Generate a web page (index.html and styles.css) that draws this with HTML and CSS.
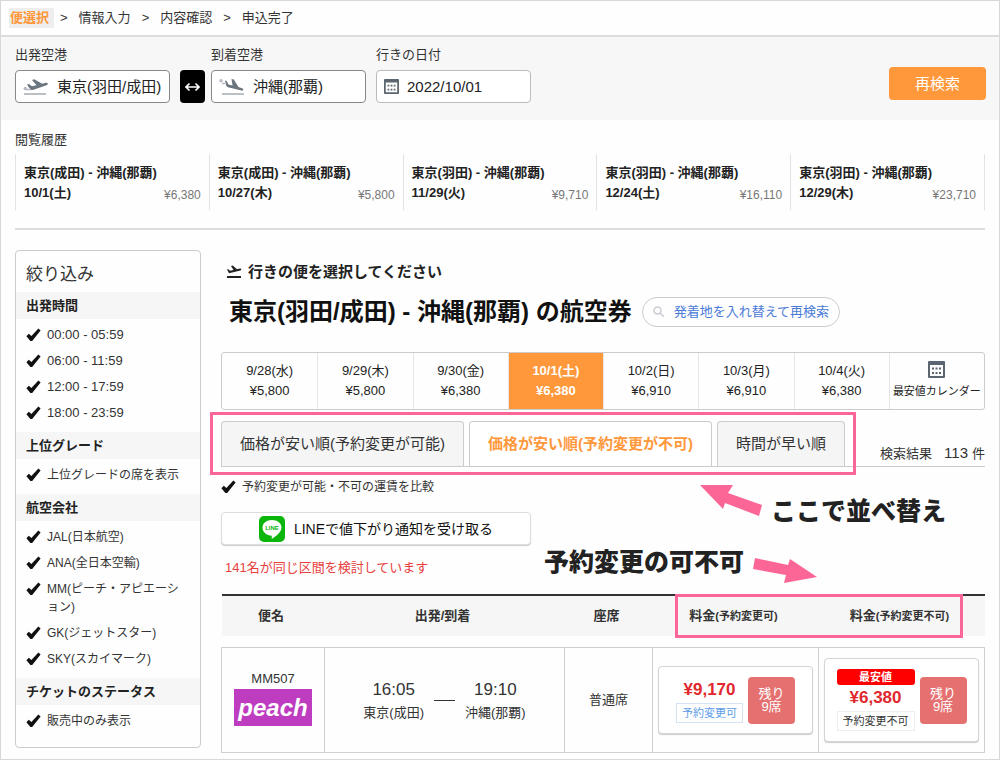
FILE: index.html
```html
<!DOCTYPE html>
<html lang="ja">
<head>
<meta charset="utf-8">
<meta name="viewport" content="width=device-width, initial-scale=1">
<title>便選択</title>
<link rel="stylesheet" href="styles.css">
</head>
<body>
<svg class="defs" aria-hidden="true">
  <symbol id="check" viewBox="0 0 15 14"><path d="M0.4 8.2 L2.8 5.8 L5.4 8 L12.4 0.6 L14.6 2.4 L6.2 13 L4.4 13 Z" fill="#111"/></symbol>
  <symbol id="calendar" viewBox="0 0 17 17"><path fill="#5b6670" fill-rule="evenodd" d="M1 0h15a1 1 0 0 1 1 1v15a1 1 0 0 1-1 1H1a1 1 0 0 1-1-1V1a1 1 0 0 1 1-1zM2 4v11h13V4z"/><path fill="#5b6670" d="M4 6.500h2v2H4zM7.500 6.500h2v2h-2zM11 6.500h2v2h-2zM4 11h2v2H4zM7.500 11h2v2h-2zM11 11h2v2h-2z"/></symbol>
</svg>
<div class="page">
  <nav class="steps" aria-label="申込手順">
    <span class="step-current">便選択</span><span class="sep">&gt;</span><span>情報入力</span><span class="sep">&gt;</span><span>内容確認</span><span class="sep">&gt;</span><span>申込完了</span>
  </nav>

  <form class="search">
    <div class="field">
      <label for="from">出発空港</label>
      <div class="box">
        <svg width="26" height="18" viewBox="0 0 26 18" aria-hidden="true"><path fill="#6b757d" d="M4 6.500l1.800-.5 3.200 2.300 4.500-1.100L9 2l2.200-.7 8 4.400 3.600-.9c2.200-.4 2.800 1.700.7 2.400L10.500 11.800c-2 .5-2.800.1-3.700-1z"/><circle cx="2.200" cy="10.500" r="1.700" fill="#b4bac0"/><path d="M3 11.500h5" stroke="#b4bac0" stroke-width="1.500"/><path d="M1 16h22" stroke="#a4abb1" stroke-width="1.500"/></svg>
        <input id="from" type="text" value="東京(羽田/成田)">
      </div>
    </div>
    <button class="swap" type="button" aria-label="出発と到着を入れ替え"><svg width="15" height="10" viewBox="0 0 15 10" aria-hidden="true"><path d="M1 5h13M4.500 1.500L1 5l3.500 3.500M10.500 1.500L14 5l-3.500 3.500" fill="none" stroke="#fff" stroke-width="1.600"/></svg></button>
    <div class="field">
      <label for="to">到着空港</label>
      <div class="box">
        <svg width="26" height="18" viewBox="0 0 26 18" aria-hidden="true"><path fill="#6b757d" d="M6 2.500l1.700.5 1.700 3.400 4.200 1.200L12.500 1l2.300.6 4.700 7.500 3.500 1.100c2.200.8 1.500 2.800-.6 2.400L10 9.500c-2-.6-2.800-1.200-3-2.800z"/><circle cx="2" cy="2.800" r="1.700" fill="#b4bac0"/><path d="M3 5.500h3" stroke="#b4bac0" stroke-width="1.500"/><path d="M3 16h22" stroke="#a4abb1" stroke-width="1.500"/></svg>
        <input id="to" type="text" value="沖縄(那覇)">
      </div>
    </div>
    <div class="field date">
      <label for="date">行きの日付</label>
      <div class="box light">
        <svg width="15" height="15" aria-hidden="true"><use href="#calendar"/></svg>
        <input id="date" type="text" value="2022/10/01">
      </div>
    </div>
    <button class="research" type="submit">再検索</button>
  </form>

  <section class="history">
    <h2>閲覧履歴</h2>
    <ul>
      <li><b>東京(成田) - 沖縄(那覇)</b><div><b>10/1(土)</b><span>¥6,380</span></div></li>
      <li><b>東京(成田) - 沖縄(那覇)</b><div><b>10/27(木)</b><span>¥5,800</span></div></li>
      <li><b>東京(羽田) - 沖縄(那覇)</b><div><b>11/29(火)</b><span>¥9,710</span></div></li>
      <li><b>東京(羽田) - 沖縄(那覇)</b><div><b>12/24(土)</b><span>¥16,110</span></div></li>
      <li><b>東京(羽田) - 沖縄(那覇)</b><div><b>12/29(木)</b><span>¥23,710</span></div></li>
    </ul>
  </section>

  <div class="columns">
    <aside class="filter">
      <h2>絞り込み</h2>
      <h3>出発時間</h3>
      <div class="group times">
        <label class="check"><input type="checkbox" checked><svg><use href="#check"/></svg><span>00:00 - 05:59</span></label>
        <label class="check"><input type="checkbox" checked><svg><use href="#check"/></svg><span>06:00 - 11:59</span></label>
        <label class="check"><input type="checkbox" checked><svg><use href="#check"/></svg><span>12:00 - 17:59</span></label>
        <label class="check"><input type="checkbox" checked><svg><use href="#check"/></svg><span>18:00 - 23:59</span></label>
      </div>
      <h3>上位グレード</h3>
      <div class="group">
        <label class="check"><input type="checkbox" checked><svg><use href="#check"/></svg><span>上位グレードの席を表示</span></label>
      </div>
      <h3>航空会社</h3>
      <div class="group">
        <label class="check"><input type="checkbox" checked><svg><use href="#check"/></svg><span>JAL(日本航空)</span></label>
        <label class="check"><input type="checkbox" checked><svg><use href="#check"/></svg><span>ANA(全日本空輸)</span></label>
        <label class="check"><input type="checkbox" checked><svg><use href="#check"/></svg><span>MM(ピーチ・アピエーション)</span></label>
        <label class="check"><input type="checkbox" checked><svg><use href="#check"/></svg><span>GK(ジェットスター)</span></label>
        <label class="check"><input type="checkbox" checked><svg><use href="#check"/></svg><span>SKY(スカイマーク)</span></label>
      </div>
      <h3>チケットのステータス</h3>
      <div class="group">
        <label class="check"><input type="checkbox" checked><svg><use href="#check"/></svg><span>販売中のみ表示</span></label>
      </div>
    </aside>

    <main>
      <p class="lead"><svg width="16" height="14" viewBox="0 0 16 14" aria-hidden="true"><path fill="#222" d="M1 4.500l1.500-.3 1.500 1.600 3.500-.8L5 1l1.700-.4L11 4.300l3-.7c1.500-.3 1.800 1.400.4 1.800L3 8.300z"/><path d="M1 12h14" stroke="#222" stroke-width="2"/></svg>行きの便を選択してください</p>
      <div class="title">
        <h1>東京(羽田/成田) - 沖縄(那覇) の航空券</h1>
        <button type="button" class="reverse"><svg width="12" height="12" viewBox="0 0 12 12" aria-hidden="true"><circle cx="4.500" cy="4.500" r="3.500" fill="none" stroke="#c8ccd2" stroke-width="1.500"/><path d="M7.200 7.200l3.600 3.600" stroke="#c8ccd2" stroke-width="1.500"/></svg>発着地を入れ替えて再検索</button>
      </div>

      <div class="dates">
        <button type="button">9/28(水)<br>¥5,800</button>
        <button type="button">9/29(木)<br>¥5,800</button>
        <button type="button">9/30(金)<br>¥6,380</button>
        <button type="button" class="on">10/1(土)<br>¥6,380</button>
        <button type="button">10/2(日)<br>¥6,910</button>
        <button type="button">10/3(月)<br>¥6,910</button>
        <button type="button">10/4(火)<br>¥6,380</button>
        <button type="button" class="cal"><svg width="17" height="17" aria-hidden="true"><use href="#calendar"/></svg><span>最安値カレンダー</span></button>
      </div>

      <div class="sort">
        <div class="tabs">
          <button type="button">価格が安い順(予約変更が可能)</button>
          <button type="button" class="on">価格が安い順(予約変更が不可)</button>
          <button type="button">時間が早い順</button>
          <div class="mark"></div>
        </div>
        <p class="count">検索結果<b>113</b>件</p>
      </div>

      <div class="options">
        <label class="check"><input type="checkbox" checked><svg><use href="#check"/></svg><span>予約変更が可能・不可の運賃を比較</span></label>
        <button type="button" class="line"><svg width="26" height="26" viewBox="0 0 26 26" aria-hidden="true"><rect width="26" height="26" rx="5" fill="#0cb50c"/><path fill="#fff" d="M13 4c5.500 0 9.500 3.300 9.500 7.600 0 4-4.200 7.800-9 10.900-.8.500-1-.1-.8-1l.2-1.700C7.400 19.600 3.500 16.200 3.500 11.600 3.500 7.300 7.500 4 13 4z"/><text x="13" y="14" text-anchor="middle" class="line-logo">LINE</text></svg>LINEで値下がり通知を受け取る</button>
        <p class="notice">141名が同じ区間を検討しています</p>

        <div class="note note-sort">
          <svg width="64" height="32" viewBox="0 0 64 32" aria-hidden="true"><path fill="#fb6696" d="M1 0H34L29 8L63 20L60 31L26 18L24 24Z"/></svg>
          <span>ここで並べ替え</span>
        </div>
        <div class="note note-change">
          <span>予約変更の可不可</span>
          <svg width="66" height="28" viewBox="0 0 66 28" aria-hidden="true"><path fill="#fb6696" d="M3 2L36 9L38 3L65 21L32 27L34 19L1 13Z"/></svg>
        </div>
      </div>

      <div class="results">
        <table>
          <colgroup><col class="c-flight"><col class="c-time"><col class="c-seat"><col class="c-fare"><col class="c-fare"></colgroup>
          <thead>
            <tr><th>便名</th><th>出発/到着</th><th>座席</th><th>料金<small>(予約変更可)</small></th><th>料金<small>(予約変更不可)</small></th></tr>
          </thead>
          <tbody>
            <tr>
              <td>MM507<div class="peach">peach</div></td>
              <td>
                <div class="trip">
                  <div><strong>16:05</strong>東京(成田)</div>
                  <i></i>
                  <div><strong>19:10</strong>沖縄(那覇)</div>
                </div>
              </td>
              <td class="seat">普通席</td>
              <td>
                <div class="fare">
                  <div class="price"><strong>¥9,170</strong><span class="tag blue">予約変更可</span></div>
                  <button type="button">残り<br>9席</button>
                </div>
              </td>
              <td>
                <div class="fare best">
                  <div class="price"><em>最安値</em><strong>¥6,380</strong><span class="tag">予約変更不可</span></div>
                  <button type="button">残り<br>9席</button>
                </div>
              </td>
            </tr>
          </tbody>
        </table>
        <div class="mark"></div>
      </div>
    </main>
  </div>
</div>
</body>
</html>
```
FILE: styles.css
```css
* { box-sizing: border-box; }
body, h1, h2, h3, p, ul { margin: 0; padding: 0; }
body {
  font-family: "Liberation Sans", "Noto Sans CJK JP", sans-serif;
  font-size: 13px;
  line-height: 20px;
  color: #333;
  background: #fff;
}
button, input { font: inherit; color: inherit; margin: 0; }
button { padding: 0; border: 0; background: none; cursor: pointer; }
.defs { display: none; }
.page { border: 1px solid #d8d8d8; min-height: 100vh; background: #fefefe; }

.steps {
  display: flex;
  align-items: center;
  gap: 11px;
  padding: 7px 8px;
  border-bottom: 2px solid #ddd;
}
.step-current { background: #eee; color: #ff983a; font-weight: bold; padding: 0 5px 0 1px; margin-right: -5px; }

.search {
  display: flex;
  align-items: flex-end;
  padding: 8px 13px 17px 14px;
  background: #f7f7f7;
}
.field { flex: 0 1 155px; min-width: 0; }
.field label { display: block; margin-bottom: 5px; }
.date { margin-left: 10px; }
.box {
  display: flex;
  align-items: center;
  gap: 8px;
  height: 33px;
  padding-left: 7px;
  border: 1px solid #888;
  border-radius: 4px;
  background: #fff;
}
.box svg { flex: none; }
.box input { flex: 1; width: 0; min-width: 0; border: 0; padding: 0; background: none; font-size: 15px; outline: 0; color: #222; }
.box.light { border-color: #bbb; }
.swap { display: grid; place-items: center; width: 25px; height: 33px; margin: 0 6px 0 10px; border-radius: 4px; background: #000; }
.research {
  width: 97px;
  height: 33px;
  margin: 0 0 3px auto;
  border-radius: 4px;
  background: #ff983a;
  color: #fff;
  font-size: 15px;
}

.history { padding: 10px 14px 17px; }
.history h2 { font-size: 13px; font-weight: normal; margin-bottom: 4px; }
.history ul { display: grid; grid-template-columns: repeat(5, 1fr); list-style: none; border-right: 1px solid #e2e2e2; }
.history li { padding: 9px 8px 7px; border-left: 1px solid #e2e2e2; white-space: nowrap; color: #222; }
.history li > b { display: block; }
.history li div { display: flex; justify-content: space-between; }
.history li span { font-size: 12px; line-height: 24px; height: 20px; color: #777; }
.history::after { content: ""; display: block; margin-top: 18px; border-bottom: 2px solid #ddd; }

.columns { display: flex; align-items: flex-start; gap: 20px; padding: 3px 14px 6px; }

.filter { flex: none; width: 186px; border: 1px solid #ccc; border-radius: 4px; padding-bottom: 7px; }
.filter h2 { font-size: 17px; font-weight: normal; line-height: 24px; padding: 12px 10px 5px; }
.filter h3 { font-size: 13px; line-height: 27px; padding: 0 10px; background: #f6f6f6; color: #222; }
.group { display: grid; gap: 8px; padding: 7px 10px 10px; }
.check { display: grid; grid-template-columns: 15px 1fr; column-gap: 6px; font-size: 12px; line-height: 18px; line-break: normal; }
.check input, .check svg { grid-area: 1 / 1; width: 15px; height: 14px; margin: 2px 0 0; }
.check input { opacity: 0; }
.check svg { pointer-events: none; }
.check input:not(:checked) + svg { visibility: hidden; }
.times .check { font-size: 13px; }

main { flex: 1; min-width: 0; }
.lead { display: flex; align-items: center; gap: 6px; margin: 12px 5px 0; font-size: 15px; font-weight: bold; color: #222; }
.title { display: flex; align-items: center; gap: 10px; margin: 15px 0 25px 8px; }
.title h1 { font-size: 24px; line-height: 30px; color: #111; white-space: nowrap; }
.reverse { display: flex; align-items: center; gap: 9px; height: 30px; padding: 0 10px; border: 1px solid #ccc; border-radius: 15px; color: #4a7bd8; white-space: nowrap; }

.dates { display: grid; grid-template-columns: repeat(8, 1fr); border: 1px solid #ccc; border-radius: 3px; color: #222; }
.dates button { height: 56px; border-left: 1px solid #e6e6e6; white-space: nowrap; }
.dates button:first-child { border-left: 0; }
.dates .on { background: #ff983a; color: #fff; font-weight: bold; }
.dates .cal { display: flex; flex-direction: column; align-items: center; justify-content: center; gap: 3px; font-size: 11px; }

.sort { display: flex; justify-content: space-between; border-bottom: 1px solid #ccc; margin-top: 11px; }
.tabs { position: relative; display: flex; gap: 5px; font-size: 15px; }
.tabs button { height: 45px; padding: 0 18px; border: 1px solid #ccc; border-bottom: 0; border-radius: 4px 4px 0 0; background: #f5f5f5; white-space: nowrap; }
.tabs .on { background: #fff; color: #ff983a; font-weight: bold; }
.count { align-self: flex-end; margin-bottom: 2px; white-space: nowrap; }
.count b { font-size: 15px; font-weight: normal; margin: 0 4px 0 12px; }
.mark { position: absolute; border: 3px solid #fb6696; pointer-events: none; }
.tabs .mark { inset: -9px -11px -9px -11px; }

.options { position: relative; padding-top: 11px; }
.options .check { margin-bottom: 16px; }
.line {
  display: flex;
  align-items: center;
  justify-content: center;
  gap: 9px;
  width: 310px;
  height: 33px;
  border: 1px solid #ddd;
  border-radius: 4px;
  background: #fff;
  box-shadow: 0 1px 1px #ccc;
  font-size: 14px;
  color: #111;
}
.line-logo { font: bold 6px "Liberation Sans", sans-serif; fill: #0cb50c; }
.notice { margin: 13px 0 16px 4px; color: #e83e3e; }
.note { position: absolute; display: flex; gap: 8px; font-size: 25px; line-height: 36px; font-weight: 900; color: #222; white-space: nowrap; }
.note-sort { top: 18px; right: 39px; }
.note-sort span { padding-top: 8px; }
.note-change { top: 77px; right: 167px; }
.note-change svg { margin-top: 12px; }

.results { position: relative; }
.results .mark { top: 0; right: 22px; width: 288px; height: 44px; }
table { width: 100%; border-collapse: collapse; table-layout: fixed; text-align: center; }
.c-flight { width: 103px; }
.c-seat { width: 88px; }
.c-fare { width: 166px; }
thead { border-top: 2px solid #333; background: #f6f6f6; }
th { height: 41px; padding: 0 4px 0 0; color: #333; white-space: nowrap; }
th small { font-size: 11px; }
tbody::before { content: ""; display: block; height: 11px; }
td { height: 105px; padding: 0 5px; border: 1px solid #d0d0d0; }
.peach { width: 78px; margin: 0 auto 6px; background: #be3cc0; color: #fff; font-size: 24px; line-height: 37px; font-style: italic; font-weight: bold; }
.trip { display: flex; align-items: center; justify-content: center; gap: 10px; }
.trip strong { display: block; font-size: 17px; line-height: 26px; font-weight: normal; }
.trip i { width: 21px; border-top: 1px solid #333; }
.fare { display: flex; align-items: center; justify-content: center; gap: 5px; height: 68px; border: 1px solid #d4d4d4; border-radius: 4px; box-shadow: 0 1px 1px #ccc; background: #fff; }
.fare.best { height: 84px; }
.price { display: flex; flex-direction: column; align-items: center; }
.price strong { font-size: 17px; line-height: 26px; color: #e0282d; }
.tag { padding: 0 5px; border: 1px solid #eee; font-size: 11px; line-height: 18px; }
.tag.blue { border-color: #d5e4f5; color: #5b9be8; }
.price em { align-self: stretch; border-radius: 3px; background: #f00; color: #fff; font-size: 11px; font-style: normal; font-weight: bold; line-height: 16px; }
.fare button { flex: none; width: 47px; height: 47px; border-radius: 4px; background: #e57070; color: #fff; line-height: 13px; }
```
